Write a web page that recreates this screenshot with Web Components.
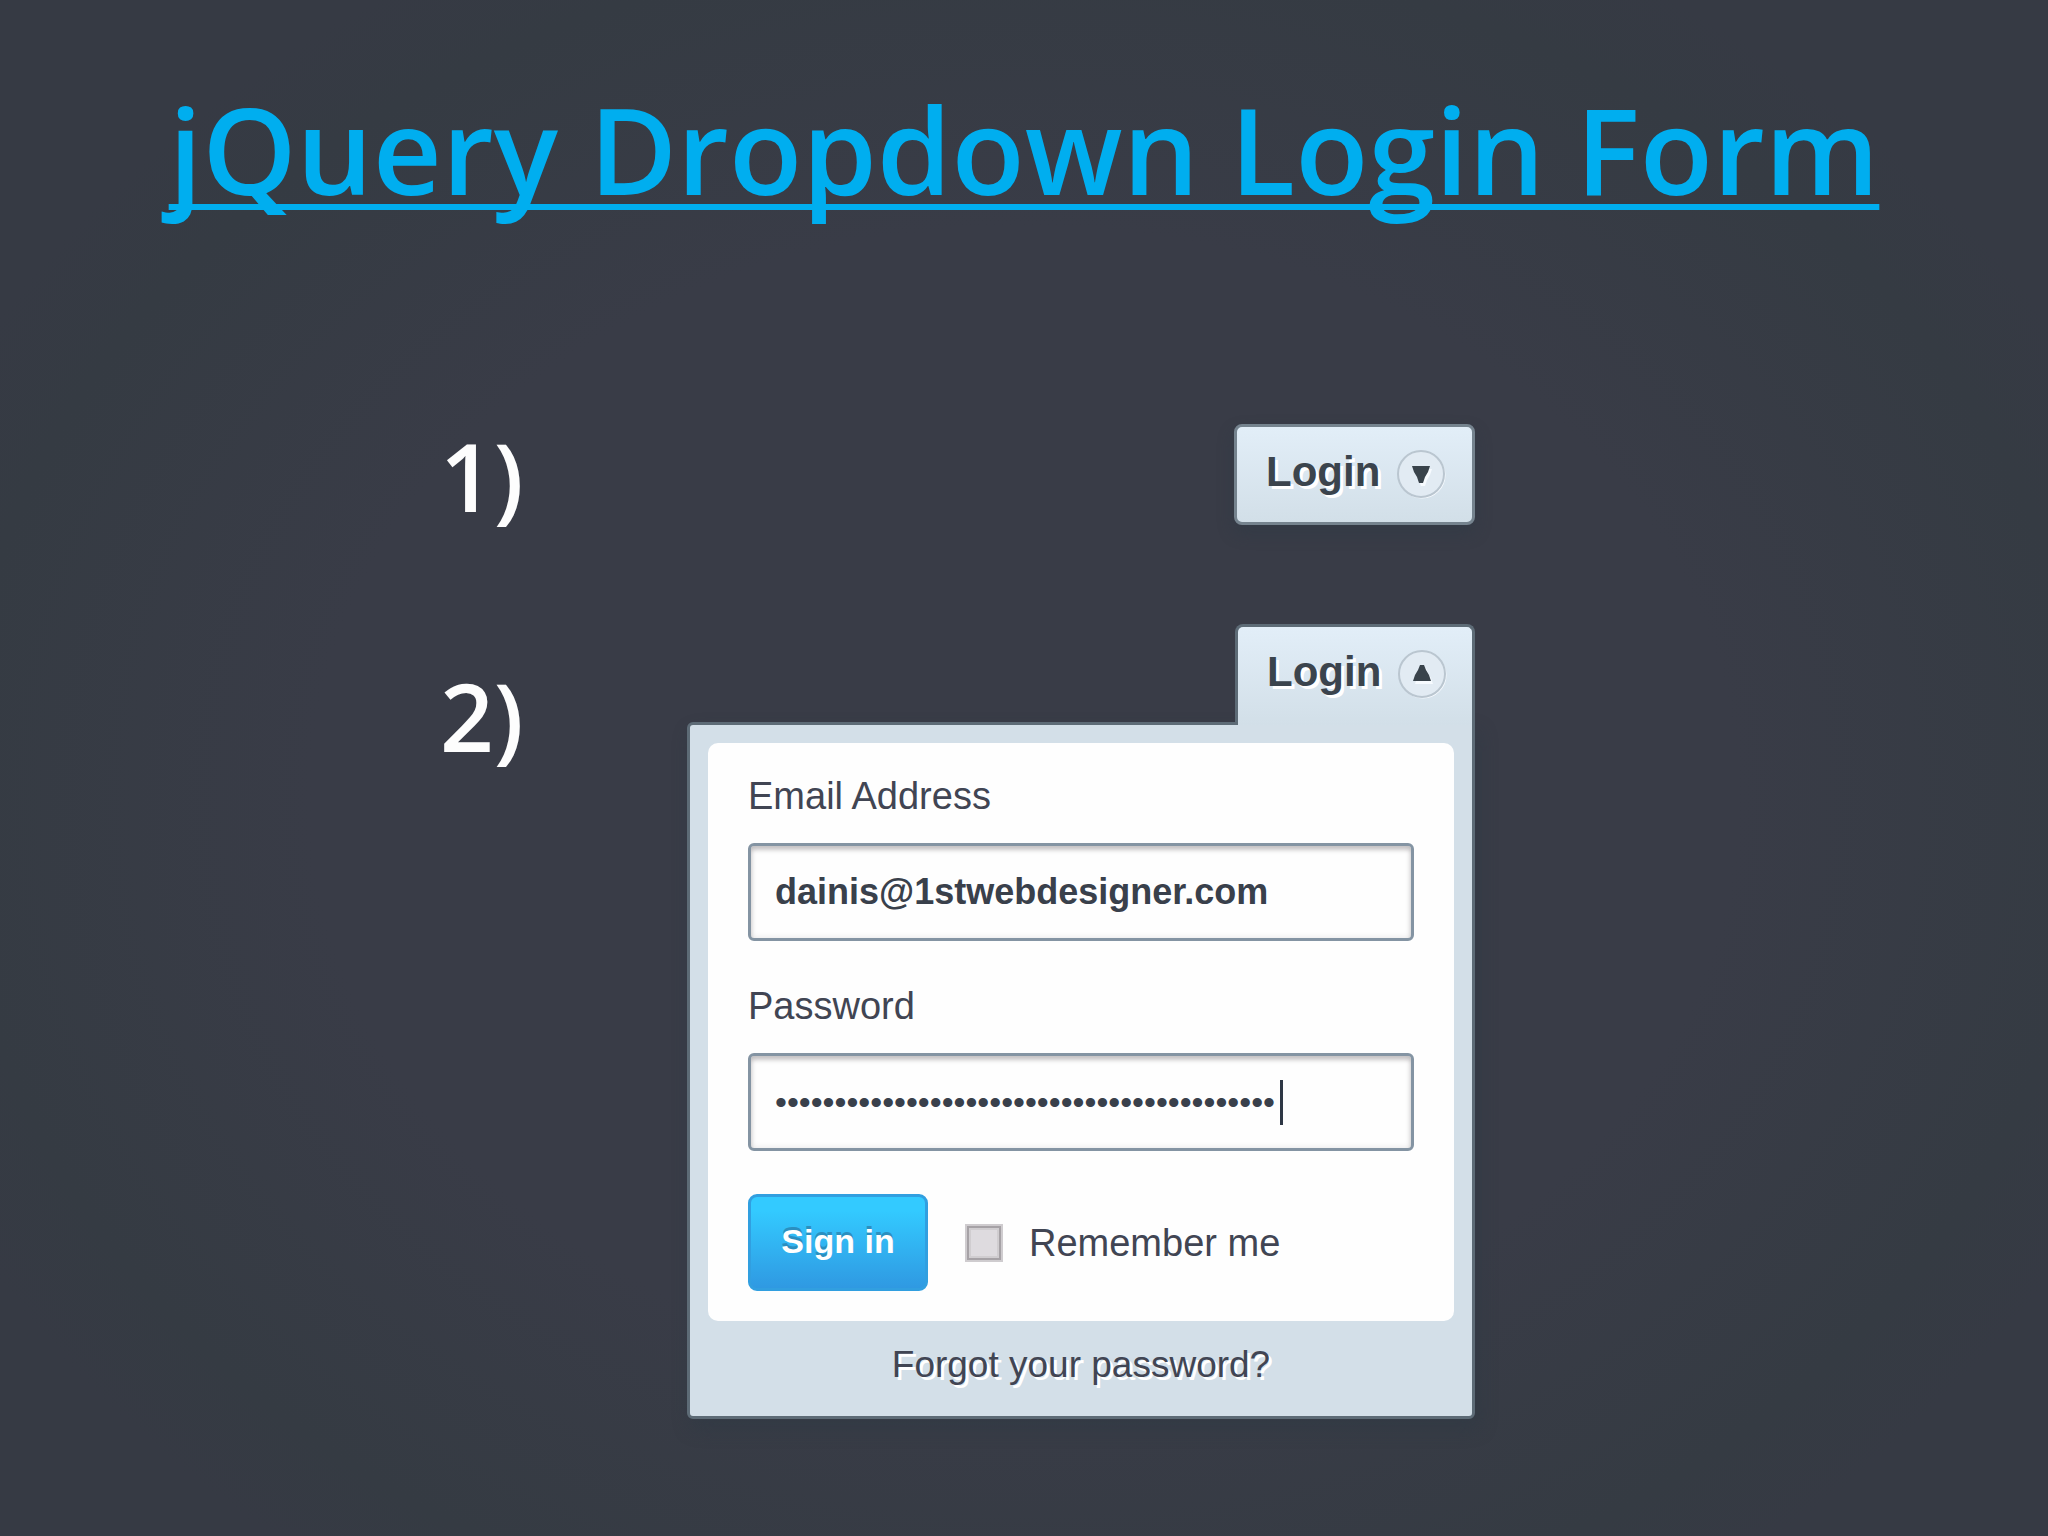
<!DOCTYPE html>
<html lang="en">
<head>
<meta charset="utf-8">
<title>jQuery Dropdown Login Form</title>
<style>
  html, body { margin: 0; min-height: 100%; background: #363b45; }
</style>
</head>
<body>
<slide-page>
  <slide-title slot="title" href="#login">jQuery Dropdown Login Form</slide-title>
  <demo-step label="1)"><login-toggle>Login</login-toggle></demo-step>
  <demo-step label="2)" lowered>
    <login-dropdown>
      <login-toggle slot="toggle" open>Login</login-toggle>
      <login-form></login-form>
      <a slot="footer" href="#forgot">Forgot your password?</a>
    </login-dropdown>
  </demo-step>
</slide-page>

<script>
class BaseElement extends HTMLElement {
  connectedCallback() {
    if (this.shadowRoot) return;
    this.attachShadow({ mode: 'open' }).innerHTML =
      '<style>* { box-sizing: border-box; } ' + this.styles() + '</style>' + this.markup();
  }
}

customElements.define('slide-page', class extends BaseElement {
  styles() { return `
    :host {
      display: block; box-sizing: border-box; min-height: 100vh; padding: 69px 0 67px;
      background: radial-gradient(ellipse 58% 62% at 50% 52%, #393c47 0%, #393c47 60%, #353b43 90%, #363a44 100%);
      color: #fdfdfd; font-family: "Open Sans", "Noto Sans", sans-serif;
    }
    .steps { display: flex; flex-direction: column; gap: 96px; margin-top: 195px; }
  `; }
  markup() { return `<main><slot name="title"></slot><div class="steps"><slot></slot></div></main>`; }
});

customElements.define('slide-title', class extends BaseElement {
  styles() { return `
    :host { display: block; text-align: center; }
    h1 { margin: 0; font-size: 120px; line-height: 160px; font-weight: 600; white-space: nowrap; }
    a { color: #00aeef; text-decoration: underline; text-decoration-thickness: 6px;
        text-underline-offset: 9px; text-decoration-skip-ink: none; }
  `; }
  markup() { return `<h1><a href="${this.getAttribute('href')}"><slot></slot></a></h1>`; }
});

customElements.define('demo-step', class extends BaseElement {
  styles() { return `
    :host { display: grid; grid-template-columns: 440fr 247px 788px 573fr; align-items: start; }
    .number { grid-column: 2; font-size: 94px; line-height: 104px; font-weight: 600; }
    :host([lowered]) .number { padding-top: 40px; }
    .content { grid-column: 3; display: flex; flex-direction: column; align-items: flex-end; }
  `; }
  markup() { return `<div class="number">${this.getAttribute('label')}</div><div class="content"><slot></slot></div>`; }
});

customElements.define('login-toggle', class extends BaseElement {
  styles() { return `
    :host { display: block; position: relative; font-family: "Liberation Sans", Arial, sans-serif; }
    button {
      display: flex; align-items: center; gap: 16px; height: 101px; width: 241px; padding: 0 27px 2px 29px;
      border: 3px solid #75838e; border-radius: 8px;
      background: linear-gradient(#e2eef8, #d2dfe8);
      box-shadow: 0 8px 16px rgba(45, 58, 68, .45);
      color: #3b444d; font: bold 42px/48px "Liberation Sans", Arial, sans-serif;
      text-shadow: 3px 3px 0 #fff;
    }
    span { padding-bottom: 4px; }
    svg { flex: none; width: 50px; height: 50px; }
    :host([open]) { z-index: 1; margin-bottom: -3px; }
    :host([open]) button { width: 240px; padding: 0 22px 4px 29px; border-color: #5d6b76;
      border-bottom: 0; border-radius: 8px 8px 0 0; box-shadow: none; }
  `; }
  markup() {
    const open = this.hasAttribute('open');
    const arrow = open ? 'M23 16h4l2 5 3 5 2 6H16l2-6 3-5z' : 'M16 17h18l-2 6-3 5-2 6h-4l-2-6-3-5z';
    return `<button type="button" aria-expanded="${open}"><span><slot></slot></span>
      <svg viewBox="0 0 50 50" aria-hidden="true">
        <circle cx="26" cy="26" r="22" fill="none" stroke="#f7fbff" stroke-width="3"/>
        <circle cx="25" cy="25" r="23" fill="#e2ebf3" stroke="#bac6d0" stroke-width="2"/>
        <path d="${arrow}" transform="translate(2 3)" fill="#f7fbff"/>
        <path d="${arrow}" fill="#39434b"/>
      </svg></button>`;
  }
});

customElements.define('login-dropdown', class extends BaseElement {
  styles() { return `
    :host { display: flex; flex-direction: column; align-items: flex-end; width: 100%;
            font-family: "Liberation Sans", Arial, sans-serif; }
    section { width: 100%; padding: 18px 18px 0; border: 3px solid #5d6b76; border-radius: 6px 0 6px 6px;
              background: #d3dfe8; box-shadow: 4px 10px 18px rgba(45, 58, 68, .45); }
    footer { padding: 22px 0 29px; text-align: center; font-size: 37px; line-height: 44px; }
    ::slotted(a) { color: #414553; text-decoration: none; text-shadow: 3px 3px 0 #fff; }
  `; }
  markup() { return `<slot name="toggle"></slot><section><slot></slot><footer><slot name="footer"></slot></footer></section>`; }
});

customElements.define('login-field', class extends BaseElement {
  styles() { return `
    :host { display: flex; flex-direction: column; gap: 25px; }
    label { font-size: 38px; line-height: 44px; color: #414553; }
    input {
      width: 100%; height: 98px; padding: 0 24px; border: 3px solid #8494a3; border-radius: 6px; outline: 0;
      background: #fefefe; box-shadow: inset 0 4px 4px rgba(60, 50, 55, .25), inset 0 0 6px rgba(60, 50, 55, .12);
      color: #39404b; font: bold 36px/44px "Liberation Sans", Arial, sans-serif;
    }
    input[type=password] {
      font-size: 34px; font-weight: normal;
      background: linear-gradient(#2e3745, #2e3745) 529px center / 3px 45px no-repeat #fefefe;
    }
  `; }
  markup() { return `<label for="control">${this.getAttribute('label')}</label>
    <input id="control" type="${this.getAttribute('type')}" value="${this.getAttribute('value')}">`; }
});

customElements.define('login-form', class extends BaseElement {
  styles() { return `
    :host { display: block; }
    form { display: flex; flex-direction: column; gap: 43px; margin: 0; padding: 31px 40px 30px;
           background: #fefefe; border-radius: 10px; }
    .actions { display: flex; align-items: center; }
    button { width: 180px; height: 97px; padding: 0 0 4px; border: 3px solid #319fe0; border-radius: 9px;
             background: linear-gradient(#33caff 15%, #2f99e2); color: #fff;
             font: bold 34px/44px "Liberation Sans", Arial, sans-serif; text-shadow: 0 -3px 0 #2b8fc0; }
    input { appearance: none; flex: none; width: 38px; height: 38px; margin: 0 26px 0 37px;
            border: 2px solid #cfcccf; background: #dedbdf;
            box-shadow: inset 0 0 0 2px #a6a2a6, inset 0 0 0 4px #d0cdd0; }
    label { font-size: 38px; line-height: 44px; color: #414553; }
  `; }
  markup() { return `<form>
      <login-field label="Email Address" type="email" value="dainis@1stwebdesigner.com"></login-field>
      <login-field label="Password" type="password" value="${'x'.repeat(42)}"></login-field>
      <div class="actions"><button type="button">Sign in</button>
        <input id="remember" type="checkbox"><label for="remember">Remember me</label></div>
    </form>`; }
});
</script>
</body>
</html>
